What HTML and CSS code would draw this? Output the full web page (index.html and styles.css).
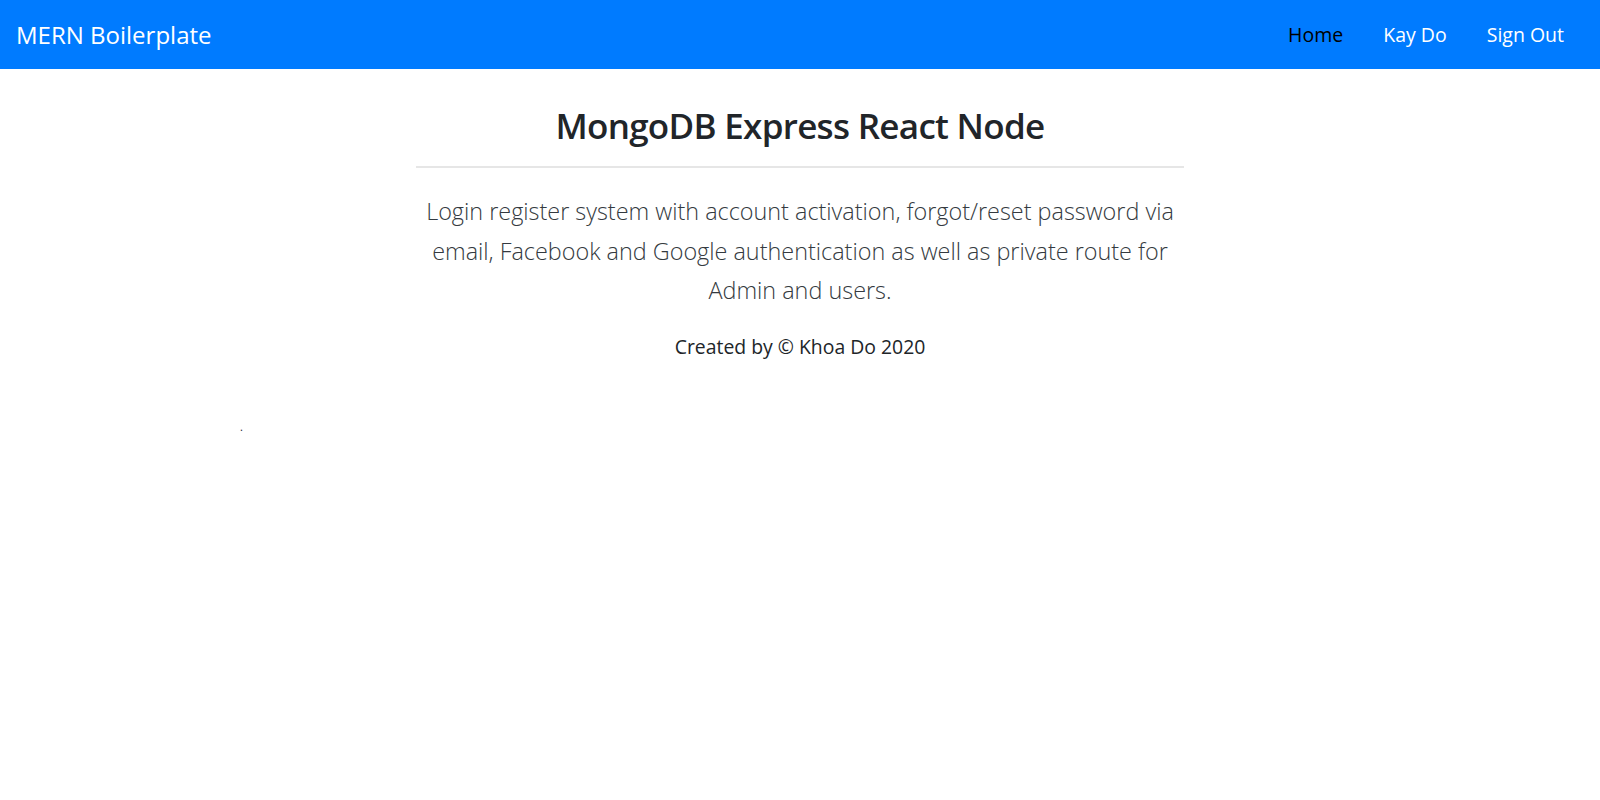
FILE: index.html
```html
<!DOCTYPE html>
<html lang="en">
<head>
<meta charset="utf-8">
<title>MERN Boilerplate</title>
<link rel="stylesheet" href="styles.css">
</head>
<body>
<nav class="navbar">
  <a class="brand" href="#">MERN Boilerplate</a>
  <ul class="nav">
    <li><a class="nav-link active" href="#">Home</a></li>
    <li><a class="nav-link" href="#">Kay Do</a></li>
    <li><a class="nav-link" href="#">Sign Out</a></li>
  </ul>
</nav>
<main class="content">
  <section class="hero">
    <h1 class="title">MongoDB Express React Node</h1>
    <hr class="rule">
    <p class="lead">Login register system with account activation, forgot/reset password via email, Facebook and Google authentication as well as private route for Admin and users.</p>
    <p class="credit">Created by © Khoa Do 2020</p>
  </section>
  <div class="stray">.</div>
</main>
</body>
</html>
```
FILE: styles.css
```css
* { box-sizing: border-box; }
html, body { margin: 0; padding: 0; background: #fff; }
body {
  font-family: "Open Sans", "Noto Sans", "Liberation Sans", sans-serif;
  color: #212529;
}
.navbar {
  height: 69px;
  background: #007bff;
  display: flex;
  align-items: center;
  justify-content: space-between;
  padding: 0 16px;
}
.brand {
  color: #fff;
  text-decoration: none;
  font-size: 24px;
  line-height: 1;
}
.nav {
  list-style: none;
  margin: 0;
  padding: 0;
  display: flex;
}
.nav-link {
  display: block;
  padding: 0 20px;
  color: #fff;
  text-decoration: none;
  font-size: 19.5px;
  line-height: 1;
}
.nav-link.active { color: #000; }
.content {
  position: relative;
  height: 731px;
}
.hero {
  width: 768px;
  margin: 0 auto;
  text-align: center;
  padding-top: 33px;
}
.title {
  margin: 0;
  font-size: 35px;
  font-weight: 600;
  letter-spacing: -0.7px;
  line-height: 48px;
  color: #212529;
}
.rule {
  border: 0;
  border-top: 2px solid #e6e6e6;
  margin: 16px 0 24px;
}
.lead {
  margin: 0;
  font-size: 23.4px;
  font-weight: 300;
  line-height: 39.5px;
  color: #343a40;
}
.credit {
  margin: 21px 0 0;
  font-size: 19.4px;
  line-height: 30px;
  color: #212529;
}
.stray {
  position: absolute;
  left: 240px;
  top: 352px;
  font-size: 11px;
  line-height: 1;
  color: #212529;
}
```
